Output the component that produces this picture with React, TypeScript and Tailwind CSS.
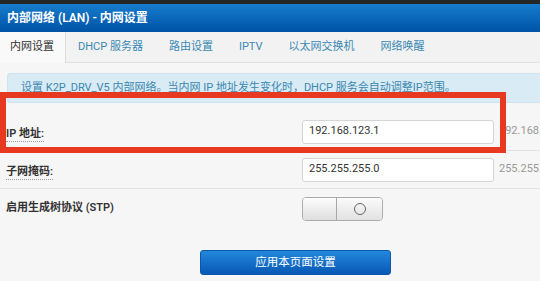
import React from "react";

const font = { fontFamily: '"Roboto","Noto Sans CJK SC",sans-serif' };

function Row({ label, children, border = true }: { label: string; children: React.ReactNode; border?: boolean }) {
  return (
    <div className={`grid grid-cols-[302px_192px_1fr] items-center h-[38px] ${border ? "border-b border-[#e2e2e2]" : ""}`}>
      <div className="pl-[6px]">
        <span className="text-[11px] font-semibold text-[#333] border-b border-dotted border-[#9a9a9a] leading-[14px] inline-block">
          {label}
        </span>
      </div>
      {children}
    </div>
  );
}

export default function App() {
  const tabs = ["DHCP 服务器", "路由设置", "IPTV", "以太网交换机", "网络唤醒"];
  return (
    <div className="w-[540px] h-[281px] overflow-hidden relative bg-[#f6f6f6]" style={font}>
      <div className="h-[4px] bg-[#262626]" />
      <div className="h-[28px] bg-gradient-to-b from-[#177dcd] to-[#0152a6] flex items-center pl-[7px] text-white text-[12px] font-semibold">
        内部网络 (LAN) - 内网设置
      </div>
      <div className="h-[31px] flex bg-[#f2f2f2] border-b border-[#e0e0e0]">
        <div className="w-[66px] flex items-center pl-[10px] bg-[#f9f9f9] border-r border-[#dcdcdc] text-[11px] text-[#333] h-[31px]">
          内网设置
        </div>
        <div className="flex items-center -ml-px">
          {tabs.map((t) => (
            <div key={t} className="px-[13px] text-[11px] text-[#3a89b3]">
              {t}
            </div>
          ))}
        </div>
      </div>
      <div className="mt-[10px] ml-[7px] h-[30px] rounded-l-[4px] bg-[#d9ebf5] border border-[#cde3ef] border-r-0 flex items-center pl-[13px] text-[11px] text-[#3b88b0] whitespace-nowrap">
        设置 K2P_DRV_V5 内部网络。当内网 IP 地址发生变化时，DHCP 服务会自动调整IP范围。
      </div>
      <div className="mt-[10px]">
        <Row label="IP 地址:">
          <div className="h-[24px] bg-white border border-[#d5d5d5] rounded-[3px] flex items-center pl-[6px] text-[11px] text-[#333]">
            192.168.123.1
          </div>
          <div className="pl-[5px] text-[11px] text-[#999] whitespace-nowrap">192.168.123.1</div>
        </Row>
        <Row label="子网掩码:">
          <div className="h-[24px] bg-white border border-[#d5d5d5] rounded-[3px] flex items-center pl-[6px] text-[11px] text-[#333]">
            255.255.255.0
          </div>
          <div className="pl-[5px] text-[11px] text-[#999] whitespace-nowrap">255.255.255.0</div>
        </Row>
        <div className="grid grid-cols-[302px_192px_1fr] items-center h-[39px]">
          <div className="pl-[6px] text-[11px] font-semibold text-[#333]">启用生成树协议 (STP)</div>
          <div className="w-[81px] h-[24px] flex rounded-[4px] border border-[#ababab] overflow-hidden">
            <div className="w-[34px] h-full bg-gradient-to-b from-[#fdfdfd] to-[#dedede] border-r border-[#a8a8a8]" />
            <div className="flex-1 h-full bg-gradient-to-b from-[#fafafa] to-[#e2e2e2] flex items-center justify-center">
              <div className="w-[12px] h-[12px] rounded-full border-[1.5px] border-[#666]" />
            </div>
          </div>
        </div>
      </div>
      <div className="mt-[22px] ml-[200px] w-[191px] h-[25px] rounded-[3px] bg-gradient-to-b from-[#2388dc] to-[#0858b4] border border-[#0a56a8] flex items-center justify-center text-white text-[11.5px]">
        应用本页面设置
      </div>
      <div className="absolute left-0 top-[92px] w-[506px] h-[61px] border-[6px] border-[#e6391f]" />
    </div>
  );
}
